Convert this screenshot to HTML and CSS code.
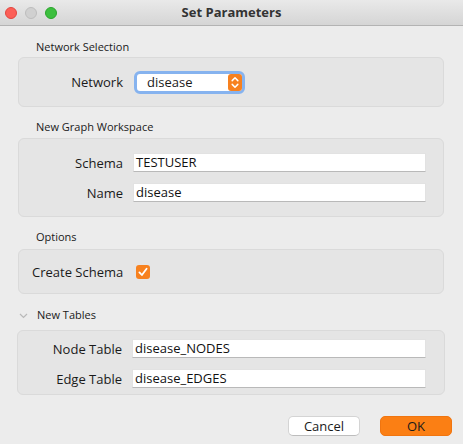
FILE: index.html
```html
<!DOCTYPE html>
<html>
<head>
<meta charset="utf-8">
<link rel="stylesheet" href="styles.css">
</head>
<body>
<div class="window">
  <div class="titlebar">
    <div class="lights">
      <span class="light red"></span>
      <span class="light gray"></span>
      <span class="light green"></span>
    </div>
    <div class="title">Set Parameters</div>
  </div>
  <div class="content">
    <div class="section s1">
      <div class="sec-label">Network Selection</div>
      <div class="panel p1">
        <div class="row">
          <span class="lbl">Network</span>
          <div class="combo">
            <span class="combo-text">disease</span>
            <span class="stepper">
              <svg width="14" height="17" viewBox="0 0 14 17"><path d="M4.2 6.6 L7 3.8 L9.8 6.6 M4.2 10.4 L7 13.2 L9.8 10.4" fill="none" stroke="#fff" stroke-width="1.5" stroke-linecap="round" stroke-linejoin="round"/></svg>
            </span>
          </div>
        </div>
      </div>
    </div>
    <div class="section s2">
      <div class="sec-label">New Graph Workspace</div>
      <div class="panel p2">
        <div class="row"><span class="lbl">Schema</span><div class="field">TESTUSER</div></div>
        <div class="row"><span class="lbl">Name</span><div class="field">disease</div></div>
      </div>
    </div>
    <div class="section s3">
      <div class="sec-label">Options</div>
      <div class="panel p3">
        <span class="opt-lbl">Create Schema</span>
        <span class="check">
          <svg width="14" height="14" viewBox="0 0 14 14"><path d="M3.4 7.4 L5.9 10 L10.6 3.8" fill="none" stroke="#fff" stroke-width="1.8" stroke-linecap="round" stroke-linejoin="round"/></svg>
        </span>
      </div>
    </div>
    <div class="section s4">
      <div class="sec-label collapsible">
        <svg class="chev" width="9" height="6" viewBox="0 0 9 6"><path d="M1 1 L4.5 4.5 L8 1" fill="none" stroke="#b9b9b9" stroke-width="1.2"/></svg>
        <span>New Tables</span>
      </div>
      <div class="panel p4">
        <div class="row"><span class="lbl">Node Table</span><div class="field">disease_NODES</div></div>
        <div class="row"><span class="lbl">Edge Table</span><div class="field">disease_EDGES</div></div>
      </div>
    </div>
    <div class="buttons">
      <button class="btn cancel">Cancel</button>
      <button class="btn ok">OK</button>
    </div>
  </div>
</div>
</body>
</html>
```

FILE: styles.css
```css
html, body {
  margin: 0;
  padding: 0;
  background: #ececec;
}
body {
  width: 463px;
  height: 444px;
  overflow: hidden;
  font-family: "Open Sans", "Noto Sans", "DejaVu Sans", sans-serif;
  color: #1a1a1a;
}
.window {
  width: 463px;
  height: 444px;
  background: #ececec;
}
.titlebar {
  height: 25px;
  border-bottom: 1px solid #b3b3b3;
  background: linear-gradient(#e9e9e9, #d5d5d5);
  display: flex;
  align-items: center;
  position: relative;
}
.lights {
  display: flex;
  gap: 8px;
  padding-left: 5px;
  align-items: center;
}
.light {
  width: 12px;
  height: 12px;
  border-radius: 50%;
  box-sizing: border-box;
}
.light.red { background: #fc5f57; border: 0.5px solid #e2463f; }
.light.gray { background: #d0d0d0; border: 0.5px solid #bdbdbd; }
.light.green { background: #3dbf3f; border: 0.5px solid #2aa52c; }
.title {
  position: absolute;
  left: 0;
  right: 0;
  top: 0;
  line-height: 25px;
  text-align: center;
  font-weight: bold;
  font-size: 13px;
  color: #333;
}
.content {
  padding-top: 13px;
}
.sec-label {
  height: 16px;
  line-height: 16px;
  font-size: 11px;
  padding-left: 36px;
  color: #1a1a1a;
}
.collapsible {
  display: flex;
  align-items: center;
  padding-left: 19px;
}
.collapsible .chev {
  margin-right: 9px;
  margin-top: 2px;
}
.panel {
  margin-left: 18px;
  width: 426px;
  box-sizing: border-box;
  background: #e5e5e5;
  border: 1px solid #dadada;
  border-radius: 6px;
}
.s1 .panel { margin-top: 2px; height: 50px; display: flex; align-items: center; }
.s2 { margin-top: 12px; }
.s2 .panel { margin-top: 3px; height: 79px; padding: 14px 17px 0 0; display: flex; flex-direction: column; gap: 11px; }
.s3 { margin-top: 12px; }
.s3 .panel { margin-top: 4px; height: 45px; display: flex; align-items: center; padding-left: 13px; gap: 13px; }
.s4 { margin-top: 13px; }
.s4 .panel { margin-top: 7px; margin-left: 17px; width: 428px; height: 65px; padding: 8px 18px 0 0; display: flex; flex-direction: column; gap: 11px; }
.row {
  display: flex;
  align-items: center;
}
.lbl {
  width: 104px;
  text-align: right;
  font-size: 13px;
  margin-right: 10px;
  flex: none;
}
.field {
  flex: 1;
  height: 19px;
  box-sizing: border-box;
  background: #fff;
  border: 1px solid #e2e2e2;
  border-bottom-color: #b9b9b9;
  font-size: 13px;
  line-height: 17px;
  padding-left: 2px;
  color: #111;
}
.combo {
  margin-left: 1px;
  width: 111px;
  height: 23px;
  box-sizing: border-box;
  border: 3px solid #86b3ef;
  border-radius: 6px;
  background: #fff;
  display: flex;
  align-items: center;
  justify-content: space-between;
  padding: 0 0 0 10px;
}
.combo-text {
  font-size: 13px;
  line-height: 17px;
}
.stepper {
  width: 14px;
  height: 17px;
  background: #f7811f;
  border-radius: 3px;
  display: flex;
}
.opt-lbl {
  font-size: 13px;
}
.check {
  width: 14px;
  height: 14px;
  border-radius: 3px;
  background: #f7811f;
  display: flex;
}
.buttons {
  margin-top: 21px;
  display: flex;
  justify-content: flex-end;
  gap: 20px;
  padding-right: 11px;
}
.btn {
  width: 72px;
  height: 20px;
  border-radius: 5px;
  font-family: inherit;
  font-size: 13px;
  line-height: 18px;
  padding: 0;
  color: #1a1a1a;
  box-sizing: border-box;
}
.cancel {
  background: #fff;
  border: 1px solid #d4d4d4;
  border-bottom-color: #bdbdbd;
}
.ok {
  background: #fb7f14;
  border: 1px solid #f07510;
}
```
